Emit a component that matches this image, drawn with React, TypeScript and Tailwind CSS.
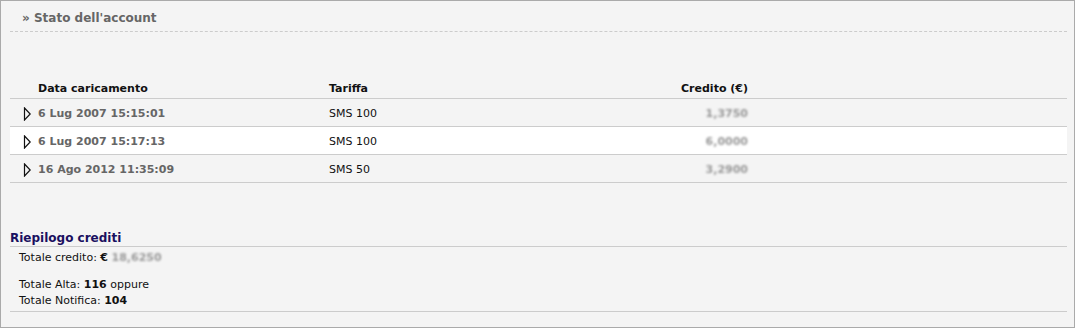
import React from "react";

const font = { fontFamily: "Tahoma, 'DejaVu Sans', sans-serif" };

function Tri() {
  return (
    <svg width="8" height="14" viewBox="0 0 8 14" className="shrink-0">
      <polygon points="1.5,1 7.2,7 1.5,13" fill="none" stroke="#111" strokeWidth="1.2" />
    </svg>
  );
}

const rows = [
  { d: "6 Lug 2007 15:15:01", t: "SMS 100", c: "1,3750", bg: "" },
  { d: "6 Lug 2007 15:17:13", t: "SMS 100", c: "6,0000", bg: "bg-white" },
  { d: "16 Ago 2012 11:35:09", t: "SMS 50", c: "3,2900", bg: "" },
];

export default function App() {
  return (
    <div className="bg-white w-[1076px] h-[331px]" style={font}>
      <div className="w-[1075px] h-[328px] border border-[#aaa] bg-[#f4f4f4] pl-[9px] pr-[7px] text-[11px] text-[#111]">
        <div className="h-[31px] border-b border-dashed border-[#ccc] pl-[12px] pt-[9px] text-[12px] font-bold text-[#666] leading-[16px]">
          » Stato dell'account
        </div>
        <div className="mt-[48px] flex h-[19px] items-center border-b border-[#ccc] font-bold leading-[14px]">
          <div className="w-[319px] pl-[28px]">Data caricamento</div>
          <div className="w-[300px]">Tariffa</div>
          <div className="w-[119px] text-right">Credito (€)</div>
        </div>
        {rows.map((r) => (
          <div key={r.d} className={`flex h-[28px] items-center pt-[3px] border-b border-[#ccc] ${r.bg}`}>
            <div className="w-[319px] pl-[13px] flex items-center gap-[7px]">
              <Tri />
              <span className="font-bold text-[#666]">{r.d}</span>
            </div>
            <div className="w-[300px]">{r.t}</div>
            <div className="w-[119px] text-right">
              <span className="text-[#999] blur-[1.3px] font-bold">{r.c}</span>
            </div>
          </div>
        ))}
        <div className="mt-[45px] h-[19px] pt-[2px] border-b border-[#ccc] text-[12px] font-bold text-[#1a1060] leading-[16px]">
          Riepilogo crediti
        </div>
        <div className="pl-[9px] pt-[4px] leading-[14px]">
          <div>
            Totale credito: <b>€</b> <span className="text-[#999] blur-[1.3px] font-bold">18,6250</span>
          </div>
          <div className="mt-[13px]">
            Totale Alta: <b>116</b> oppure
          </div>
          <div className="mt-[2px]">
            Totale Notifica: <b>104</b>
          </div>
        </div>
        <div className="mt-[3px] border-b border-[#ccc]" />
      </div>
    </div>
  );
}
